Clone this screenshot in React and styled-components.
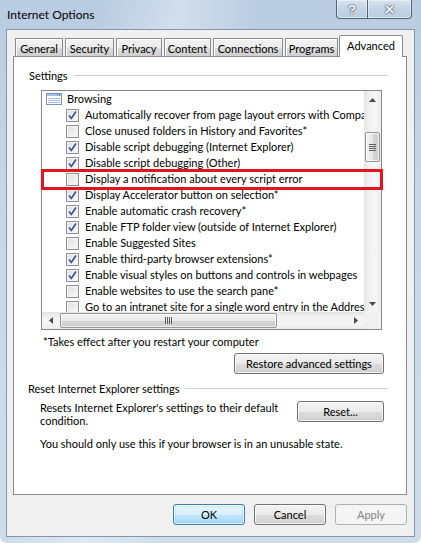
import React from 'react';
import styled, { createGlobalStyle } from 'styled-components';

const options = [
  { label: 'Automatically recover from page layout errors with Compatibility View', checked: true },
  { label: 'Close unused folders in History and Favorites*', checked: false },
  { label: 'Disable script debugging (Internet Explorer)', checked: true },
  { label: 'Disable script debugging (Other)', checked: true },
  { label: 'Display a notification about every script error', checked: false },
  { label: 'Display Accelerator button on selection*', checked: true },
  { label: 'Enable automatic crash recovery*', checked: true },
  { label: 'Enable FTP folder view (outside of Internet Explorer)', checked: true },
  { label: 'Enable Suggested Sites', checked: false },
  { label: 'Enable third-party browser extensions*', checked: true },
  { label: 'Enable visual styles on buttons and controls in webpages', checked: true },
  { label: 'Enable websites to use the search pane*', checked: false },
  { label: 'Go to an intranet site for a single word entry in the Address bar', checked: false },
];

const tabs = [
  { name: 'General', w: 48 },
  { name: 'Security', w: 49 },
  { name: 'Privacy', w: 46 },
  { name: 'Content', w: 47 },
  { name: 'Connections', w: 70 },
  { name: 'Programs', w: 53 },
  { name: 'Advanced', w: 64, active: true },
];

function App() {
  return (
    <>
      <Global />
      <Window>
        <TitleBar>
          <Title>Internet Options</Title>
          <Captions>
            <CaptionBtn $w={31} $left>?</CaptionBtn>
            <CaptionBtn $w={45}>✕</CaptionBtn>
          </Captions>
        </TitleBar>

        <Client>
          <TabStrip>
            {tabs.map((t) => (
              <Tab key={t.name} $w={t.w} $active={t.active}>{t.name}</Tab>
            ))}
          </TabStrip>

          <Panel>
            <GroupHeader>
              <span>Settings</span>
              <Rule />
            </GroupHeader>

            <ListWrap>
              <ListBox>
                <Rows>
                  <Row $indent={4}>
                    <BrowsingIcon />
                    <Label $gap={5}>Browsing</Label>
                  </Row>
                  {options.map((o) => (
                    <Row key={o.label} $indent={24}>
                      <Check checked={o.checked} />
                      <Label $gap={6}>{o.label}</Label>
                    </Row>
                  ))}
                </Rows>

                <VScroll>
                  <Arrow><Tri dir="up" /></Arrow>
                  <VTrack>
                    <VThumb style={{ marginTop: 24 }}>
                      <Grip $vertical />
                    </VThumb>
                  </VTrack>
                  <Arrow><Tri dir="down" /></Arrow>
                </VScroll>

                <HScroll>
                  <Arrow><Tri dir="left" /></Arrow>
                  <HTrack>
                    <HThumb style={{ width: 217 }}>
                      <Grip />
                    </HThumb>
                  </HTrack>
                  <Arrow><Tri dir="right" /></Arrow>
                </HScroll>

                <Corner />
              </ListBox>
              <Highlight />
            </ListWrap>

            <Note>*Takes effect after you restart your computer</Note>

            <RightRow>
              <Button $w={150}>Restore advanced settings</Button>
            </RightRow>

            <GroupHeader $top={7} $shift={-1}>
              <span>Reset Internet Explorer settings</span>
              <Rule />
            </GroupHeader>

            <ResetRow>
              <Desc>
                Resets Internet Explorer's settings to their default<br />condition.
              </Desc>
              <Button $w={87}>Reset...</Button>
            </ResetRow>

            <Warning>You should only use this if your browser is in an unusable state.</Warning>
          </Panel>

          <ButtonRow>
            <Button $w={72} $default>OK</Button>
            <Button $w={72}>Cancel</Button>
            <Button $w={72} disabled>Apply</Button>
          </ButtonRow>
        </Client>
      </Window>
    </>
  );
}

function BrowsingIcon() {
  return (
    <svg width="16" height="12" viewBox="0 0 16 12">
      <rect x="0.5" y="0.5" width="15" height="11" fill="#fff" stroke="#7f93ad" />
      <rect x="1" y="1" width="14" height="2" fill="#a9c4e4" />
      <rect x="11" y="1.5" width="1" height="1" fill="#4d6a92" />
      <rect x="13" y="1.5" width="1" height="1" fill="#4d6a92" />
      <rect x="2" y="5" width="12" height="1" fill="#9fbadb" />
      <rect x="2" y="7" width="12" height="1" fill="#9fbadb" />
      <rect x="2" y="9" width="12" height="1" fill="#9fbadb" />
    </svg>
  );
}

function Check({ checked }) {
  return (
    <Box>
      {checked && (
        <svg width="11" height="11" viewBox="0 0 11 11">
          <path d="M2 5.5 L4.3 8.5 L9 1.5" fill="none" stroke="#3350a8" strokeWidth="1.6" />
        </svg>
      )}
    </Box>
  );
}

function Tri({ dir }) {
  const pts = {
    up: '0,4 3.5,0 7,4',
    down: '0,0 7,0 3.5,4',
    left: '4,0 4,7 0,3.5',
    right: '0,0 0,7 4,3.5',
  }[dir];
  const vert = dir === 'up' || dir === 'down';
  return (
    <svg width={vert ? 7 : 4} height={vert ? 4 : 7}>
      <polygon points={pts} fill="#4a4a4a" />
    </svg>
  );
}

const Global = createGlobalStyle`
  body {
    margin: 0;
    overflow: hidden;
    font-family: "Segoe UI", Lato, "Liberation Sans", sans-serif;
    font-size: 11px;
    color: #000;
  }
`;

const Window = styled.div`
  width: 421px;
  height: 543px;
  display: flex;
  flex-direction: column;
  border-radius: 0 0 7px 7px;
  background:
    linear-gradient(100deg, rgba(255,255,255,0) 20%, rgba(255,255,255,.35) 35%, rgba(255,255,255,0) 50%),
    linear-gradient(180deg, #b9cce1 0%, #c8d7e8 40%, #cfdcea 100%);
`;

const TitleBar = styled.div`
  height: 29px;
  display: flex;
  justify-content: space-between;
  align-items: flex-start;
  padding-left: 7px;
  flex-shrink: 0;
`;

const Title = styled.div`
  padding-top: 7px;
  font-size: 12px;
  line-height: 16px;
  color: #000;
`;

const Captions = styled.div`
  display: flex;
  margin-right: 9px;
`;

const CaptionBtn = styled.div`
  width: ${(p) => p.$w}px;
  height: 19px;
  box-sizing: border-box;
  border: 1px solid rgba(45, 60, 80, 0.75);
  border-top: 0;
  ${(p) => (p.$left ? 'border-right: 0; border-radius: 0 0 0 4px;' : 'border-radius: 0 0 4px 0;')}
  background: linear-gradient(180deg, rgba(255,255,255,.45), rgba(255,255,255,.15) 50%, rgba(190,205,222,.4));
  box-shadow: inset 0 0 0 1px rgba(255,255,255,.45);
  display: flex;
  align-items: center;
  justify-content: center;
  color: #fff;
  font-family: "Liberation Sans", sans-serif;
  font-weight: bold;
  font-size: 13px;
  text-shadow: 0 0 2px #2d3b4d, 0 0 1px #2d3b4d;
`;

const Client = styled.div`
  flex: 1;
  margin: 0 6px 6px 6px;
  border: 1px solid #8496ab;
  background: #f0f0f0;
  padding: 5px 7px 0 6px;
  display: flex;
  flex-direction: column;
`;

const TabStrip = styled.div`
  height: 22px;
  display: flex;
  align-items: flex-end;
  gap: 2px;
  padding-left: 2px;
  margin-bottom: -1px;
  position: relative;
  z-index: 1;
`;

const Tab = styled.div`
  width: ${(p) => p.$w}px;
  box-sizing: border-box;
  border: 1px solid #898c95;
  border-bottom: 0;
  text-align: center;
  white-space: nowrap;
  ${(p) =>
    p.$active
      ? `
    height: 22px;
    margin-left: -1px;
    background: #fff;
    line-height: 20px;
    border-radius: 2px 2px 0 0;
  `
      : `
    height: 18px;
    margin-bottom: 1px;
    line-height: 20px;
    background: linear-gradient(180deg, #f3f3f3 0%, #ebebeb 50%, #dddddd 51%, #cfcfcf 100%);
    box-shadow: inset 0 1px 0 #fff, inset 1px 0 0 #fff;
  `}
`;

const Panel = styled.div`
  height: 439px;
  box-sizing: border-box;
  border: 1px solid #898c95;
  background: #fff;
  padding: 11px 18px 0 15px;
  display: flex;
  flex-direction: column;
`;

const GroupHeader = styled.div`
  display: flex;
  align-items: center;
  gap: 6px;
  height: 15px;
  line-height: 15px;
  margin-top: ${(p) => p.$top || 0}px;
  margin-left: ${(p) => p.$shift || 0}px;
  white-space: nowrap;
`;

const Rule = styled.div`
  flex: 1;
  height: 1px;
  background: #c9ced3;
`;

const ListWrap = styled.div`
  position: relative;
  margin: 7px 6px 0 12px;
`;

const ListBox = styled.div`
  height: 240px;
  box-sizing: border-box;
  border: 1px solid #828790;
  display: grid;
  grid-template-columns: 1fr 17px;
  grid-template-rows: 1fr 17px;
  background: #fff;
`;

const Rows = styled.div`
  overflow: hidden;
  min-width: 0;
`;

const Row = styled.div`
  height: 16px;
  display: flex;
  align-items: center;
  padding-left: ${(p) => p.$indent}px;
  white-space: nowrap;
`;

const Label = styled.span`
  margin-left: ${(p) => p.$gap}px;
  line-height: 16px;
`;

const Box = styled.span`
  width: 13px;
  height: 13px;
  box-sizing: border-box;
  flex-shrink: 0;
  border: 1px solid #8f8f8f;
  background: linear-gradient(135deg, #dcdcdc 0%, #f0f0f0 60%, #fafafa 100%);
  box-shadow: inset 0 0 0 1px #f4f4f4;
  display: flex;
  align-items: center;
  justify-content: center;
`;

const VScroll = styled.div`
  display: flex;
  flex-direction: column;
  background: linear-gradient(90deg, #e3e3e3 0%, #f2f2f2 30%, #f5f5f5 70%, #ececec 100%);
`;

const HScroll = styled.div`
  display: flex;
  background: linear-gradient(180deg, #e3e3e3 0%, #f2f2f2 30%, #f5f5f5 70%, #ececec 100%);
`;

const Arrow = styled.div`
  width: 17px;
  height: 17px;
  flex-shrink: 0;
  display: flex;
  align-items: center;
  justify-content: center;
`;

const VTrack = styled.div`
  flex: 1;
`;

const HTrack = styled.div`
  flex: 1;
  display: flex;
  align-items: center;
`;

const VThumb = styled.div`
  height: 30px;
  margin: 0 1px;
  box-sizing: border-box;
  border: 1px solid #979797;
  border-radius: 2px;
  background: linear-gradient(90deg, #f4f4f4 0%, #e8e8e8 50%, #d6d6d6 51%, #cdcdcd 100%);
  box-shadow: inset 0 0 0 1px rgba(255,255,255,.7);
  display: flex;
  align-items: center;
  justify-content: center;
`;

const HThumb = styled.div`
  height: 15px;
  margin-left: 1px;
  box-sizing: border-box;
  border: 1px solid #979797;
  border-radius: 2px;
  background: linear-gradient(180deg, #f4f4f4 0%, #e8e8e8 50%, #d6d6d6 51%, #cdcdcd 100%);
  box-shadow: inset 0 0 0 1px rgba(255,255,255,.7);
  display: flex;
  align-items: center;
  justify-content: center;
`;

const Grip = styled.div`
  ${(p) =>
    p.$vertical
      ? `width: 7px; height: 7px;
         background: repeating-linear-gradient(180deg, #5e5e5e 0 1px, transparent 1px 2px);`
      : `width: 7px; height: 7px;
         background: repeating-linear-gradient(90deg, #5e5e5e 0 1px, transparent 1px 2px);`}
`;

const Corner = styled.div`
  background: #f0f0f0;
`;

const Highlight = styled.div`
  position: absolute;
  left: 0;
  top: 79px;
  width: 342px;
  height: 21px;
  box-sizing: border-box;
  border: 3px solid #e3141e;
  pointer-events: none;
`;

const Note = styled.div`
  margin-top: 4px;
  padding-left: 14px;
  line-height: 15px;
`;

const RightRow = styled.div`
  display: flex;
  justify-content: flex-end;
  margin-top: 4px;
  padding-right: 4px;
`;

const Button = styled.button`
  width: ${(p) => p.$w}px;
  height: 21px;
  padding: 0;
  font: inherit;
  color: #000;
  border: 1px solid #707070;
  border-radius: 3px;
  background: linear-gradient(180deg, #f2f2f2 0%, #ebebeb 50%, #dddddd 51%, #cfcfcf 100%);
  box-shadow: inset 0 0 0 1px rgba(255,255,255,.75);
  flex-shrink: 0;
  ${(p) =>
    p.$default &&
    `border-color: #3c7fb1;
     background: linear-gradient(180deg, #eaf6fd 0%, #d9f0fc 50%, #bee6fd 51%, #a7d9f5 100%);
     box-shadow: inset 0 0 0 1px rgba(255,255,255,.8), inset 0 0 2px 1px rgba(72,180,230,.5);`}
  &:disabled {
    color: #838383;
    border-color: #adb2b5;
    background: #f4f4f4;
    box-shadow: none;
  }
`;

const ResetRow = styled.div`
  display: flex;
  justify-content: space-between;
  align-items: flex-start;
  margin-top: 5px;
  padding: 0 4px 0 11px;
`;

const Desc = styled.div`
  line-height: 13px;
  white-space: nowrap;
`;

const Warning = styled.div`
  margin-top: 9px;
  padding-left: 11px;
  line-height: 15px;
  white-space: nowrap;
`;

const ButtonRow = styled.div`
  display: flex;
  justify-content: flex-end;
  gap: 9px;
  margin-top: 9px;
`;

export default App;
